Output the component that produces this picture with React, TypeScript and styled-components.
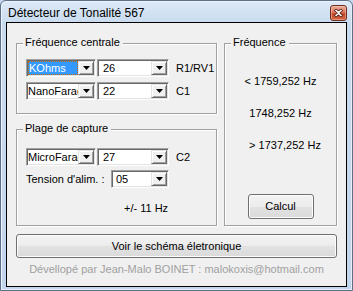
import React from "react";
import styled, { createGlobalStyle, css } from "styled-components";

const Global = createGlobalStyle`
  html, body { margin: 0; padding: 0; background: #c4d7ee; }
  body { font-family: "Liberation Sans", Arial, sans-serif; }
  * { box-sizing: border-box; }
`;

const Window = styled.div`
  width: 353px;
  height: 291px;
  border: 1px solid #5d6f88;
  border-radius: 6px 6px 0 0;
  background: linear-gradient(#dde9f7 0px, #c9dbef 22px, #c2d5ec 100%);
  box-shadow: inset 1px 1px 0 #eef4fb, inset -1px -1px 0 #e4edf8;
  display: flex;
  flex-direction: column;
  padding: 0 5px 3px 5px;
`;

const TitleBar = styled.div`
  height: 21px;
  display: flex;
  justify-content: space-between;
  align-items: flex-start;
`;

const Title = styled.div`
  margin: 5px 0 0 2px;
  font-size: 12px;
  line-height: 14px;
  color: #000;
`;

const CloseButton = styled.div`
  margin-top: 4px;
  width: 17px;
  height: 16px;
  border: 1px solid #6e2b1c;
  border-radius: 3px;
  background: linear-gradient(#e9a996 0%, #d9765e 45%, #c5472c 55%, #d0633f 100%);
  box-shadow: inset 0 0 0 1px rgba(255, 220, 200, 0.45);
  display: flex;
  align-items: center;
  justify-content: center;
`;

const Client = styled.div`
  flex: 1;
  border: 1px solid #000;
  background: #f0f0f0;
  display: flex;
  flex-direction: column;
  padding: 20px 9px 0 9px;
  font-size: 11px;
  color: #000;
`;

const TopRow = styled.div`
  display: flex;
  gap: 7px;
`;

const LeftCol = styled.div`
  width: 201px;
  display: flex;
  flex-direction: column;
  gap: 15px;
`;

const Group = styled.div<{ $pt: number; $pb: number; $w?: number }>`
  position: relative;
  border: 1px solid #a0a0a0;
  box-shadow: inset 1px 1px 0 #fff, 1px 1px 0 #fff;
  padding: ${(p) => p.$pt}px 0 ${(p) => p.$pb}px 9px;
  ${(p) =>
    p.$w &&
    css`
      width: ${p.$w}px;
      padding-left: 0;
      display: flex;
      flex-direction: column;
      align-items: center;
    `}
`;

const Legend = styled.span`
  position: absolute;
  top: -8px;
  left: 6px;
  padding: 0 3px 0 2px;
  background: #f0f0f0;
  line-height: 13px;
  white-space: nowrap;
`;

const Row = styled.div<{ $mt?: number }>`
  display: flex;
  align-items: center;
  gap: 1px;
  margin-top: ${(p) => p.$mt ?? 0}px;
`;

const SideLabel = styled.span`
  margin-left: 6px;
  line-height: 13px;
`;

const FieldLabel = styled.span`
  width: 84px;
  line-height: 13px;
  white-space: nowrap;
`;

const ComboBox = styled.div<{ $w: number }>`
  width: ${(p) => p.$w}px;
  height: 18px;
  display: flex;
  padding: 1px;
  background: #fff;
  border: 1px solid;
  border-color: #a0a0a0 #fff #fff #a0a0a0;
  box-shadow: inset 1px 1px 0 #696969, inset -1px -1px 0 #e3e3e3;
`;

const ComboText = styled.div<{ $pad: number }>`
  flex: 1;
  min-width: 0;
  overflow: hidden;
  white-space: nowrap;
  line-height: 14px;
  padding-left: ${(p) => p.$pad}px;
`;

const Highlight = styled.div`
  height: 14px;
  line-height: 12px;
  background: #3399ff;
  color: #fff;
  border: 1px dotted #cc6600;
  padding-left: 0;
`;

const DropButton = styled.div`
  width: 16px;
  height: 14px;
  flex: none;
  background: #f0f0f0;
  border: 1px solid;
  border-color: #e3e3e3 #696969 #696969 #e3e3e3;
  box-shadow: inset 1px 1px 0 #fff, inset -1px -1px 0 #a0a0a0;
  display: flex;
  align-items: center;
  justify-content: center;
`;

const Range = styled.div`
  margin: 14px 0 0 98px;
  line-height: 13px;
`;

const FreqLine = styled.div<{ $mt: number; $shift?: number }>`
  margin-top: ${(p) => p.$mt}px;
  padding-left: ${(p) => p.$shift ?? 0}px;
  line-height: 13px;
  white-space: nowrap;
`;

const PushButton = styled.div<{ $w?: number; $h: number; $mt?: number }>`
  width: ${(p) => (p.$w ? `${p.$w}px` : "100%")};
  height: ${(p) => p.$h}px;
  margin-top: ${(p) => p.$mt ?? 0}px;
  border: 1px solid #707070;
  border-radius: 3px;
  background: linear-gradient(#f3f3f3 0%, #ececec 50%, #e2e2e2 51%, #dadada 100%);
  box-shadow: inset 0 0 0 1px #fcfcfc;
  display: flex;
  align-items: center;
  justify-content: center;
  line-height: 13px;
  flex: none;
`;

const Footer = styled.div`
  margin-top: 5px;
  text-align: center;
  color: #a0a0a0;
  line-height: 13px;
  white-space: nowrap;
`;

const Arrow = () => (
  <svg width="7" height="4" viewBox="0 0 7 4">
    <polygon points="0,0 7,0 3.5,4" fill="#000" />
  </svg>
);

function Combo({
  w,
  value,
  pad,
  focused,
}: {
  w: number;
  value: string;
  pad: number;
  focused?: boolean;
}) {
  return (
    <ComboBox $w={w}>
      <ComboText $pad={pad}>
        {focused ? <Highlight>{value}</Highlight> : value}
      </ComboText>
      <DropButton>
        <Arrow />
      </DropButton>
    </ComboBox>
  );
}

export default function App() {
  return (
    <>
      <Global />
      <Window>
        <TitleBar>
          <Title>Détecteur de Tonalité 567</Title>
          <CloseButton>
            <svg width="9" height="8" viewBox="0 0 9 8">
              <path
                d="M1 0.5 L4.5 3.5 L8 0.5 M1 7.5 L4.5 4.5 L8 7.5"
                stroke="#4a1a10"
                strokeWidth="3"
                fill="none"
              />
              <path
                d="M1.5 1 L4.5 3.6 L7.5 1 M1.5 7 L4.5 4.4 L7.5 7"
                stroke="#fff"
                strokeWidth="1.6"
                fill="none"
              />
            </svg>
          </CloseButton>
        </TitleBar>
        <Client>
          <TopRow>
            <LeftCol>
              <Group $pt={15} $pb={13}>
                <Legend>Fréquence centrale</Legend>
                <Row>
                  <Combo w={70} value="KOhms" pad={0} focused />
                  <Combo w={72} value="26" pad={4} />
                  <SideLabel>R1/RV1</SideLabel>
                </Row>
                <Row $mt={5}>
                  <Combo w={70} value="NanoFarad" pad={0} />
                  <Combo w={72} value="22" pad={4} />
                  <SideLabel>C1</SideLabel>
                </Row>
              </Group>
              <Group $pt={18} $pb={10}>
                <Legend>Plage de capture</Legend>
                <Row>
                  <Combo w={70} value="MicroFarad" pad={0} />
                  <Combo w={72} value="27" pad={4} />
                  <SideLabel>C2</SideLabel>
                </Row>
                <Row $mt={4}>
                  <FieldLabel>Tension d'alim. :</FieldLabel>
                  <Combo w={58} value="05" pad={3} />
                </Row>
                <Range>+/- 11 Hz</Range>
              </Group>
            </LeftCol>
            <Group $pt={0} $pb={6} $w={113}>
              <Legend>Fréquence</Legend>
              <FreqLine $mt={31}>&lt; 1759,252 Hz</FreqLine>
              <FreqLine $mt={19}>1748,252 Hz</FreqLine>
              <FreqLine $mt={19} $shift={9}>&gt; 1737,252 Hz</FreqLine>
              <PushButton $w={66} $h={25} $mt={42}>
                Calcul
              </PushButton>
            </Group>
          </TopRow>
          <PushButton $h={24} $mt={8}>
            Voir le schéma életronique
          </PushButton>
          <Footer>Dévellopé par Jean-Malo BOINET : malokoxis@hotmail.com</Footer>
        </Client>
      </Window>
    </>
  );
}
